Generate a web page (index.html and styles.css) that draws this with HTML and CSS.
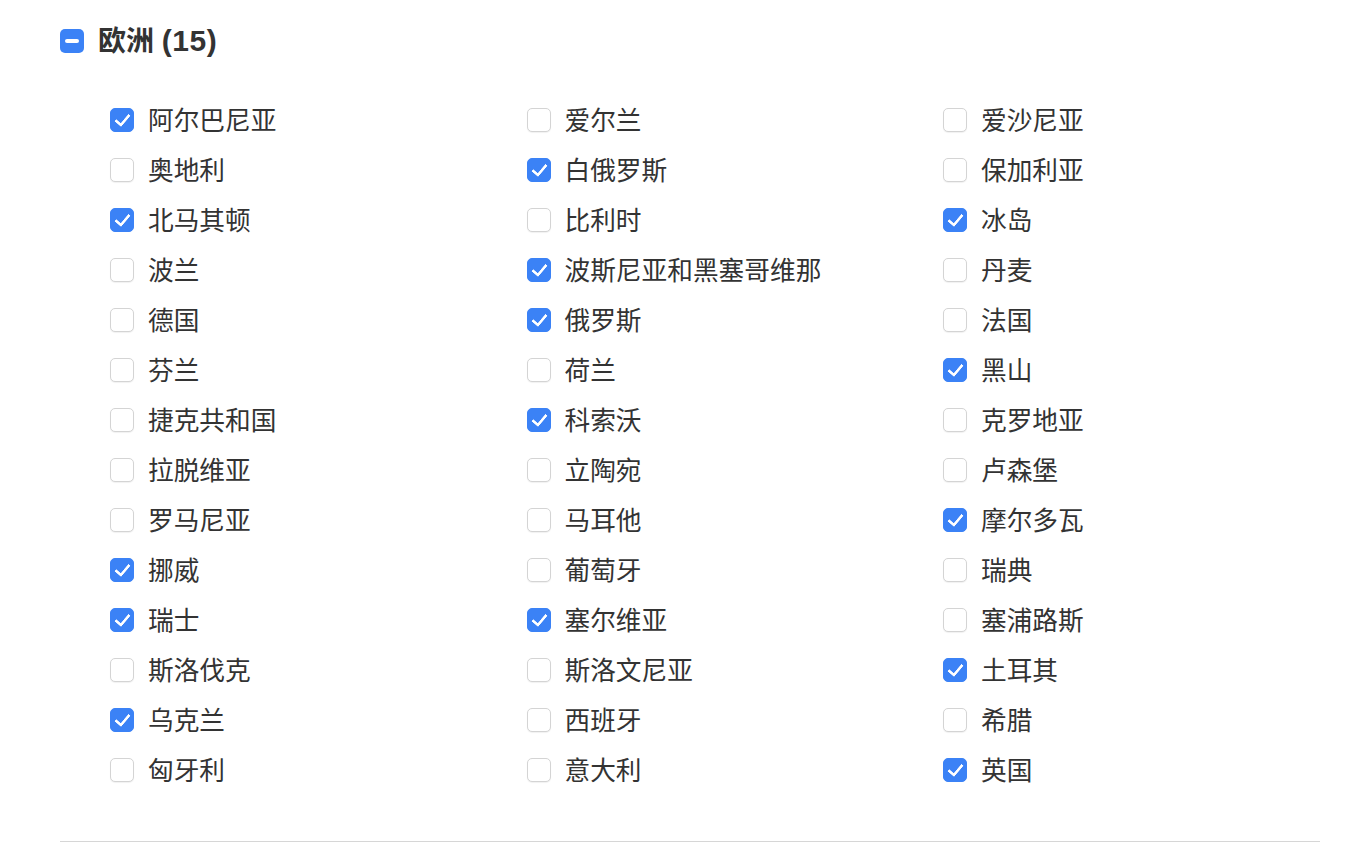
FILE: index.html
```html
<!DOCTYPE html>
<html lang="zh-CN">
<head>
  <meta charset="UTF-8" />
  <meta name="viewport" content="width=device-width, initial-scale=1.0" />
  <title>欧洲</title>
  <link rel="stylesheet" href="styles.css">
</head>
<body>
  <section class="region">
    <!-- Region header -->
    <label class="region-head">
      <span class="box box-partial"></span>
      <span class="region-title">欧洲 <span class="region-count">(15)</span></span>
    </label>

    <!-- Countries -->
    <div class="country-grid">
      <label class="country"><input type="checkbox" checked><span>阿尔巴尼亚</span></label>
      <label class="country"><input type="checkbox"><span>爱尔兰</span></label>
      <label class="country"><input type="checkbox"><span>爱沙尼亚</span></label>

      <label class="country"><input type="checkbox"><span>奥地利</span></label>
      <label class="country"><input type="checkbox" checked><span>白俄罗斯</span></label>
      <label class="country"><input type="checkbox"><span>保加利亚</span></label>

      <label class="country"><input type="checkbox" checked><span>北马其顿</span></label>
      <label class="country"><input type="checkbox"><span>比利时</span></label>
      <label class="country"><input type="checkbox" checked><span>冰岛</span></label>

      <label class="country"><input type="checkbox"><span>波兰</span></label>
      <label class="country"><input type="checkbox" checked><span>波斯尼亚和黑塞哥维那</span></label>
      <label class="country"><input type="checkbox"><span>丹麦</span></label>

      <label class="country"><input type="checkbox"><span>德国</span></label>
      <label class="country"><input type="checkbox" checked><span>俄罗斯</span></label>
      <label class="country"><input type="checkbox"><span>法国</span></label>

      <label class="country"><input type="checkbox"><span>芬兰</span></label>
      <label class="country"><input type="checkbox"><span>荷兰</span></label>
      <label class="country"><input type="checkbox" checked><span>黑山</span></label>

      <label class="country"><input type="checkbox"><span>捷克共和国</span></label>
      <label class="country"><input type="checkbox" checked><span>科索沃</span></label>
      <label class="country"><input type="checkbox"><span>克罗地亚</span></label>

      <label class="country"><input type="checkbox"><span>拉脱维亚</span></label>
      <label class="country"><input type="checkbox"><span>立陶宛</span></label>
      <label class="country"><input type="checkbox"><span>卢森堡</span></label>

      <label class="country"><input type="checkbox"><span>罗马尼亚</span></label>
      <label class="country"><input type="checkbox"><span>马耳他</span></label>
      <label class="country"><input type="checkbox" checked><span>摩尔多瓦</span></label>

      <label class="country"><input type="checkbox" checked><span>挪威</span></label>
      <label class="country"><input type="checkbox"><span>葡萄牙</span></label>
      <label class="country"><input type="checkbox"><span>瑞典</span></label>

      <label class="country"><input type="checkbox" checked><span>瑞士</span></label>
      <label class="country"><input type="checkbox" checked><span>塞尔维亚</span></label>
      <label class="country"><input type="checkbox"><span>塞浦路斯</span></label>

      <label class="country"><input type="checkbox"><span>斯洛伐克</span></label>
      <label class="country"><input type="checkbox"><span>斯洛文尼亚</span></label>
      <label class="country"><input type="checkbox" checked><span>土耳其</span></label>

      <label class="country"><input type="checkbox" checked><span>乌克兰</span></label>
      <label class="country"><input type="checkbox"><span>西班牙</span></label>
      <label class="country"><input type="checkbox"><span>希腊</span></label>

      <label class="country"><input type="checkbox"><span>匈牙利</span></label>
      <label class="country"><input type="checkbox"><span>意大利</span></label>
      <label class="country"><input type="checkbox" checked><span>英国</span></label>
    </div>
  </section>
</body>
</html>
```

FILE: styles.css
```css
/* Page */
body {
  margin: 0;
  padding: 0;
  background: #fff;
  color: #333;
  font-family: "Noto Sans CJK SC", "Noto Sans", sans-serif;
}

/* Region block */
.region {
  width: 1260px;
  margin-left: 60px;
  padding-top: 27px;
  padding-bottom: 46px;
  border-bottom: 1px solid #d6d6d6;
}

.region-head {
  display: flex;
  align-items: center;
  gap: 14px;
  height: 28px;
  cursor: pointer;
}

.region-title {
  font-family: "Liberation Sans", "Noto Sans CJK SC", sans-serif;
  font-size: 28px;
  font-weight: bold;
  color: #333;
  line-height: 28px;
}

.region-count {
  font-size: 30px;
  letter-spacing: 0.5px;
}

/* Header tri-state box */
.box {
  width: 24px;
  height: 24px;
  border-radius: 5px;
  box-sizing: border-box;
  position: relative;
  flex: none;
}
.box-partial {
  background: #3b82f6;
}
.box-partial::after {
  content: "";
  position: absolute;
  left: 5px;
  right: 5px;
  top: 10px;
  height: 4px;
  border-radius: 2px;
  background: #fff;
}

/* Country grid */
.country-grid {
  display: grid;
  grid-template-columns: repeat(3, 416.5px);
  grid-auto-rows: 50px;
  padding-left: 50px;
  margin-top: 40px;
}

.country {
  display: flex;
  align-items: center;
  gap: 14px;
  font-size: 25.7px;
  color: #333;
  cursor: pointer;
}

.country span {
  padding-bottom: 4px;
}

.country input {
  appearance: none;
  -webkit-appearance: none;
  margin: 0;
  width: 24px;
  height: 24px;
  border: 1px solid #d4d4d4;
  border-radius: 5px;
  background: #fff;
  box-shadow: 0 1px 1px rgba(0, 0, 0, 0.06);
  position: relative;
  flex: none;
  cursor: pointer;
}

.country input:checked {
  background: #3b82f6;
  border-color: #3b82f6;
  box-shadow: none;
}

.country input:checked::after {
  content: "";
  position: absolute;
  left: 7px;
  top: 2px;
  width: 6px;
  height: 12px;
  border-right: 3px solid #fff;
  border-bottom: 3px solid #fff;
  border-radius: 1px;
  transform: rotate(40deg);
}
```
